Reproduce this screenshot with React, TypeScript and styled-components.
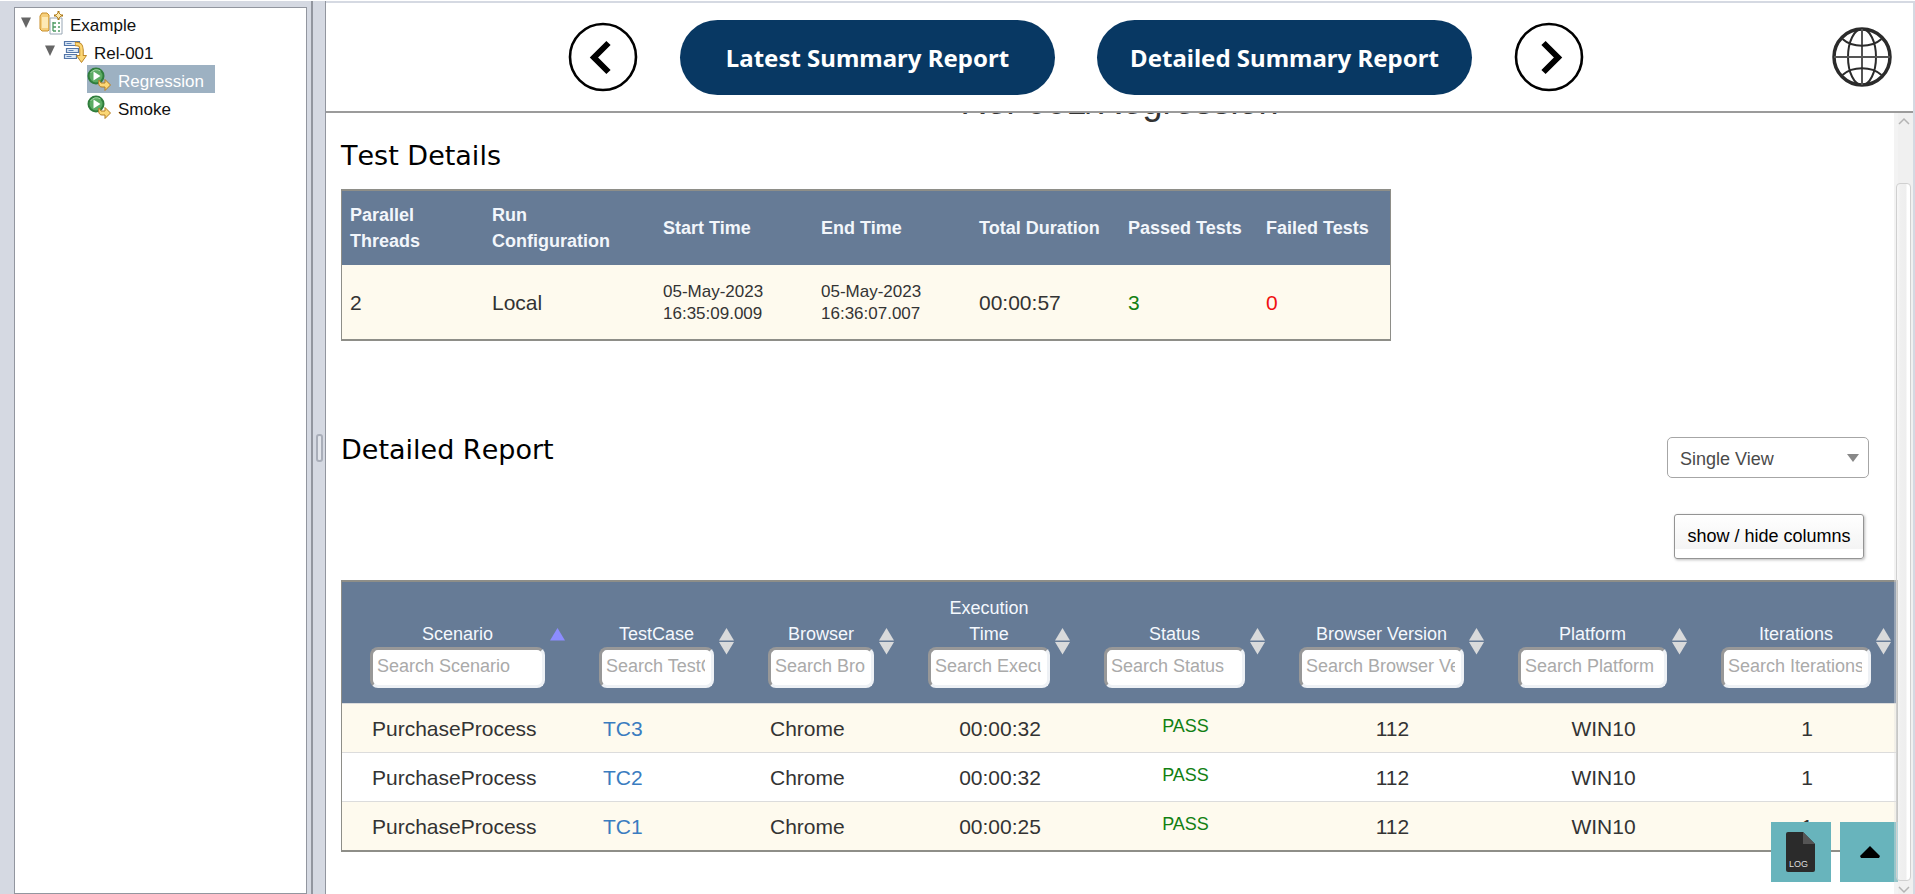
import React from "react";
import styled, { createGlobalStyle } from "styled-components";

const GlobalStyle = createGlobalStyle`
  *, *::before, *::after { box-sizing: border-box; }
  body {
    margin: 0;
    background: #fff;
    color: #333;
    font-family: "Liberation Sans", Arial, sans-serif;
    font-size: 18px;
    line-height: 26px;
  }
  button, input, select { font: inherit; }
`;

const frame = "#d5d9e2";
const edge = "#92969f";
const slate = "#667b96";
const tableEdge = "#8e8e88";

const Shell = styled.div`
  display: flex;
  height: 100vh;
  overflow: hidden;
  border-top: 1px solid #fff;
  background: ${frame};
`;

const Sidebar = styled.aside`
  flex: none;
  width: 293px;
  margin: 6px 0 0 14px;
  padding-top: 1px;
  border: 1px solid ${edge};
  background: #fff;
`;

const Tree = styled.ul`
  margin: 0;
  padding: 0;
  list-style: none;
`;

const TreeRow = styled.li<{ $level: number }>`
  display: flex;
  align-items: center;
  height: 28px;
  padding-left: ${(p) => 5 + p.$level * 24}px;
`;

const Toggle = styled.button`
  display: flex;
  width: 19px;
  margin: 0;
  padding: 0;
  border: 0;
  background: none;
`;

const NodeLabel = styled.a<{ $selected?: boolean }>`
  display: flex;
  align-items: center;
  gap: 7px;
  height: 28px;
  margin-left: ${(p) => (p.$selected === undefined ? 0 : 19)}px;
  padding-right: 11px;
  font-size: 17px;
  text-decoration: none;
  color: ${(p) => (p.$selected ? "#fff" : "#111")};
  background: ${(p) => (p.$selected ? "#9db1c2" : "transparent")};
`;

const NodeName = styled.span`
  padding-top: 6px;
  line-height: 22px;
`;

const Splitter = styled.div`
  flex: none;
  display: flex;
  align-items: center;
  justify-content: center;
  width: 15px;
  margin-left: 4px;
  border-left: 2px solid ${edge};
  border-right: 1px solid ${edge};
`;

const Grip = styled.span`
  width: 7px;
  height: 28px;
  border: 2px solid #a9aeb9;
  border-radius: 3px;
  background: #e2e5eb;
`;

const Main = styled.main`
  flex: 1;
  min-width: 0;
  display: flex;
  flex-direction: column;
  margin: 2px 2px 0 0;
  background: #fff;
`;

const TopBar = styled.header`
  flex: none;
  display: flex;
  align-items: center;
  gap: 6px;
  height: 110px;
  padding-right: 21px;
  border-bottom: 2px solid #9b9b9b;
`;

const ReportNav = styled.nav`
  flex: 1;
  display: flex;
  align-items: center;
  justify-content: center;
  gap: 42px;
`;

const IconButton = styled.button`
  display: flex;
  padding: 0;
  border: 0;
  background: none;
`;

const Pill = styled.button`
  width: 375px;
  height: 75px;
  padding: 2px 0 0;
  border: 0;
  border-radius: 38px;
  background: #083863;
  color: #fff;
  font-family: "Noto Sans", sans-serif;
  font-size: 24px;
  font-weight: 700;
`;

const Viewport = styled.div`
  position: relative;
  flex: 1;
  min-height: 0;
  overflow: hidden;
`;

const Content = styled.div`
  padding: 0 15px;
`;

const TitleStrip = styled.div`
  display: flex;
  align-items: flex-end;
  justify-content: center;
  height: 9px;
  margin-bottom: 16px;
  overflow: hidden;
`;

const Title = styled.h1`
  margin: 0;
  font-size: 36px;
  line-height: 40px;
  font-weight: 400;
`;

const Heading = styled.h2`
  margin: 0;
  font-family: "DejaVu Sans", Verdana, sans-serif;
  font-size: 27px;
  line-height: 36px;
  font-weight: 400;
  font-kerning: none;
  color: #000;
`;

const SummaryTable = styled.table`
  width: 1050px;
  max-width: 100%;
  margin: 15px 0 91px;
  table-layout: fixed;
  border: 1px solid ${tableEdge};
  border-top-width: 2px;
  border-bottom-width: 2px;
  border-collapse: separate;
  border-spacing: 0;
  th, td {
    height: 74px;
    padding: 0 8px;
    text-align: left;
    vertical-align: middle;
  }
  th { background: ${slate}; color: #f2f6fb; }
  td { padding-top: 2px; background: #fefaee; font-size: 21px; }
`;

const Stamp = styled.span`
  display: block;
  font-size: 17px;
  line-height: 22px;
`;

const Count = styled.span<{ $bad?: boolean }>`
  color: ${(p) => (p.$bad ? "#f01010" : "#128012")};
`;

const ReportHead = styled.div`
  display: flex;
  align-items: flex-start;
  justify-content: space-between;
  margin-bottom: 21px;
`;

const Controls = styled.div`
  display: flex;
  flex-direction: column;
  align-items: flex-end;
  gap: 36px;
  padding: 5px 29px 0 0;
`;

const SelectBox = styled.label`
  position: relative;
  display: block;
  svg {
    position: absolute;
    top: 17px;
    right: 10px;
    pointer-events: none;
  }
`;

const ViewSelect = styled.select`
  display: block;
  appearance: none;
  width: 202px;
  height: 41px;
  padding: 2px 12px 0;
  border: 1px solid #a6a6a6;
  border-radius: 5px;
  background: #fff;
  color: #4a4a4a;
`;

const ColumnsButton = styled.button`
  height: 45px;
  width: 190px;
  margin-right: 5px;
  padding: 0 0 2px;
  white-space: nowrap;
  border: 1px solid #949494;
  border-radius: 3px;
  background: linear-gradient(#fff 0%, #f4f4f4 78%, #fff 80%);
  box-shadow: 1px 1px 3px #bbb;
  color: #000;
`;

const ReportTable = styled.table`
  width: 100%;
  table-layout: fixed;
  border: 1px solid ${tableEdge};
  border-top-width: 2px;
  border-bottom-width: 2px;
  border-collapse: separate;
  border-spacing: 0;
  th {
    height: 121px;
    padding: 0;
    vertical-align: bottom;
    font-weight: 400;
    background: ${slate};
    color: #f4f8fd;
  }
  tbody tr:nth-child(odd) { background: #fefaee; }
`;

const HeadCell = styled.div`
  display: flex;
  align-items: flex-end;
  gap: 5px;
  padding: 0 6px 15px 28px;
`;

const Filter = styled.label`
  flex: 1;
  min-width: 0;
  text-align: center;
`;

const FilterInput = styled.input`
  display: block;
  width: 100%;
  height: 41px;
  padding: 0 6px 2px 4px;
  border: 3px solid;
  border-color: #989898 #eef1f5 #eef1f5 #989898;
  border-radius: 8px;
  background: #fff;
  color: #333;
  &::placeholder { color: #aaa; opacity: 1; }
`;

const SortButton = styled.button`
  display: flex;
  margin: 0 0 33px;
  padding: 0;
  border: 0;
  background: none;
`;

const Cell = styled.td<{ $start?: boolean }>`
  height: 49px;
  padding: 2px 5px 0 ${(p) => (p.$start ? 30 : 29)}px;
  border-top: 1px solid #dcdcdc;
  font-size: 21px;
  text-align: ${(p) => (p.$start ? "left" : "center")};
`;

const CaseLink = styled.a`
  padding-left: 2px;
  color: #3a7cc0;
  text-decoration: none;
`;

const Verdict = styled.span`
  display: block;
  padding-bottom: 6px;
  font-size: 18px;
  color: #128012;
`;

const FloatingActions = styled.div`
  position: absolute;
  right: 13px;
  bottom: 12px;
  display: flex;
  gap: 9px;
`;

const ActionButton = styled.button`
  display: flex;
  align-items: center;
  justify-content: center;
  width: 60px;
  height: 60px;
  padding: 0;
  border: 0;
  background: #68b4bc;
`;

const ScrollTrack = styled.div`
  position: absolute;
  top: 0;
  right: 0;
  bottom: 0;
  display: flex;
  flex-direction: column;
  align-items: center;
  width: 19px;
  padding: 4px 0 0;
  background: linear-gradient(to right, rgba(225, 225, 225, 0.4) 4px, #f0f0f0 4px);
`;

const ScrollThumb = styled.div`
  flex: 1;
  width: 15px;
  margin: 58px 0 5px;
  border: 1px solid #d0d0d0;
  border-radius: 4px;
  background: linear-gradient(to right, rgba(255, 255, 255, 0.3) 2px, #f0f0f0 3px, #eee 9px, #fff 10px);
`;

const Expanded = () => (
  <svg width="12" height="12" viewBox="0 0 12 12" aria-hidden="true">
    <path d="M1 0.500h10L6 11z" fill="#666" />
  </svg>
);

const FolderIcon = () => (
  <svg width="24" height="24" viewBox="0 0 24 24" aria-hidden="true">
    <path d="M1 5l2-3h5l2 2v15l-1 1H3l-2-2z" fill="#f6cf7c" stroke="#c98f2b" />
    <path d="M3 6h6v11H3z" fill="#fde9b5" />
    <path d="M11 7h12v16H11z" fill="#fff" stroke="#98a6b4" />
    <path d="M14 11v9M14 12h3M14 16h3M14 20h3M19 12h2M19 16h2M19 20h2" stroke="#4d9a63" strokeWidth="1.3" fill="none" />
    <path d="M19.500 0v9M15 4.500h9" stroke="#a87718" strokeWidth="2" />
    <path d="M19.500 1.500l3 3-3 3-3-3z" fill="#fbe9ae" stroke="#b98422" />
  </svg>
);

const ReleaseIcon = () => (
  <svg width="24" height="24" viewBox="0 0 24 24" aria-hidden="true">
    <path d="M1.500 2.500h15v4h-15zM3.500 9.500h12v4h-12zM1.500 15.500h12v4h-12z" fill="#dce8f6" stroke="#5476a8" strokeWidth="1.200" />
    <path d="M3.500 4.500h5M5.500 11.500h5M3.500 17.500h5" stroke="#5c83b8" strokeWidth="1.200" />
    <path d="M12 5c5-.5 6.500 2 6.500 6v6" fill="none" stroke="#bd8524" strokeWidth="4.500" />
    <path d="M13.500 16.500h10L18.500 23.500z" fill="#fbd776" stroke="#bd8524" />
    <path d="M12.500 5c5-.5 6 2 6 6v7" fill="none" stroke="#fbd776" strokeWidth="2.500" />
  </svg>
);

const RunIcon = () => (
  <svg width="24" height="24" viewBox="0 0 24 24" aria-hidden="true">
    <circle cx="9" cy="9" r="7.500" fill="#5cab63" stroke="#2f7d3c" strokeWidth="2" />
    <path d="M3.500 6a7 7 0 0 1 10-2" stroke="#a7d8a8" fill="none" />
    <path d="M6.500 4.500v9l7-4.500z" fill="#fff" />
    <path d="M12 13l2 3h4v-3.500l5.500 5.500-5.500 5.500V20h-3c-3 0-4-3-3-7z" fill="#fbd776" stroke="#b37d22" />
  </svg>
);

const Chevron = ({ back }: { back?: boolean }) => (
  <svg width="70" height="70" viewBox="0 0 70 70" aria-hidden="true">
    <circle cx="35" cy="35" r="33" fill="none" stroke="#000" strokeWidth="2.600" />
    <path d={back ? "M40.500 21L26 35.500 40.500 50" : "M29.500 21L44 35.500 29.500 50"} fill="none" stroke="#000" strokeWidth="6" />
  </svg>
);

const GlobeIcon = () => (
  <svg width="60" height="60" viewBox="0 0 60 60" aria-hidden="true">
    <g fill="none" stroke="#2b2b2b" strokeWidth="2">
      <circle cx="30" cy="30" r="28" strokeWidth="3.500" />
      <ellipse cx="30" cy="30" rx="14" ry="28" />
      <path d="M30 2v56M2 30h56" stroke="#555" />
      <path d="M10.500 12c10 9 29 9 39 0M10.500 48c10-9 29-9 39 0" />
    </g>
  </svg>
);

const SortIcon = ({ active }: { active?: boolean }) => (
  <svg width="15" height="27" viewBox="0 0 15 27" aria-hidden="true">
    <path d="M7.500 0L15 12.500H0z" fill={active ? "#8c8cff" : "#d9dadb"} />
    {!active && <path d="M0 14h15L7.500 26.500z" fill="#d9dadb" />}
  </svg>
);

const LogIcon = () => (
  <svg width="30" height="40" viewBox="0 0 30 40" aria-hidden="true">
    <path d="M2 0h15l12 12v26a2 2 0 0 1-2 2H2a2 2 0 0 1-2-2V2a2 2 0 0 1 2-2z" fill="#2b2b2b" />
    <path d="M17 0l12 12H17z" fill="#555" />
    <text x="3" y="35" fontSize="9" fontFamily="Liberation Sans, sans-serif" fill="#ddd">LOG</text>
  </svg>
);

const columns = [
  { name: "Scenario", width: 229 },
  { name: "TestCase", width: 169 },
  { name: "Browser", width: 160 },
  { name: "Execution Time", width: 176 },
  { name: "Status", width: 195 },
  { name: "Browser Version", width: 219 },
  { name: "Platform", width: 203 },
  { name: "Iterations", width: 204 },
];

const runs = [
  { testCase: "TC3", time: "00:00:32" },
  { testCase: "TC2", time: "00:00:32" },
  { testCase: "TC1", time: "00:00:25" },
];

const summaryWidths = [142, 171, 158, 158, 149, 138, 132];
const summaryHeads = ["Parallel Threads", "Run Configuration", "Start Time", "End Time", "Total Duration", "Passed Tests", "Failed Tests"];

export default function App() {
  return (
    <>
      <GlobalStyle />
      <Shell>
        <Sidebar>
          <Tree>
            <TreeRow $level={0}>
              <Toggle aria-label="Collapse Example"><Expanded /></Toggle>
              <NodeLabel href="#example"><FolderIcon /><NodeName>Example</NodeName></NodeLabel>
            </TreeRow>
            <TreeRow $level={1}>
              <Toggle aria-label="Collapse Rel-001"><Expanded /></Toggle>
              <NodeLabel href="#rel-001"><ReleaseIcon /><NodeName>Rel-001</NodeName></NodeLabel>
            </TreeRow>
            <TreeRow $level={2}>
              <NodeLabel href="#regression" $selected><RunIcon /><NodeName>Regression</NodeName></NodeLabel>
            </TreeRow>
            <TreeRow $level={2}>
              <NodeLabel href="#smoke" $selected={false}><RunIcon /><NodeName>Smoke</NodeName></NodeLabel>
            </TreeRow>
          </Tree>
        </Sidebar>
        <Splitter><Grip /></Splitter>
        <Main>
          <TopBar>
            <ReportNav>
              <IconButton aria-label="Back"><Chevron back /></IconButton>
              <Pill>Latest Summary Report</Pill>
              <Pill>Detailed Summary Report</Pill>
              <IconButton aria-label="Forward"><Chevron /></IconButton>
            </ReportNav>
            <IconButton aria-label="Open in browser"><GlobeIcon /></IconButton>
          </TopBar>
          <Viewport>
            <Content>
              <TitleStrip><Title>Rel-001/Regression</Title></TitleStrip>
              <Heading>Test Details</Heading>
              <SummaryTable>
                <colgroup>{summaryWidths.map((w, i) => <col key={i} width={w} />)}</colgroup>
                <thead>
                  <tr>{summaryHeads.map((h) => <th key={h}>{h}</th>)}</tr>
                </thead>
                <tbody>
                  <tr>
                    <td>2</td>
                    <td>Local</td>
                    <td><Stamp>05-May-2023 16:35:09.009</Stamp></td>
                    <td><Stamp>05-May-2023 16:36:07.007</Stamp></td>
                    <td>00:00:57</td>
                    <td><Count>3</Count></td>
                    <td><Count $bad>0</Count></td>
                  </tr>
                </tbody>
              </SummaryTable>
              <ReportHead>
                <Heading>Detailed Report</Heading>
                <Controls>
                  <SelectBox>
                    <ViewSelect aria-label="View"><option>Single View</option></ViewSelect>
                    <svg width="12" height="8" viewBox="0 0 12 8" aria-hidden="true"><path d="M0 0h12L6 8z" fill="#888" /></svg>
                  </SelectBox>
                  <ColumnsButton>show / hide columns</ColumnsButton>
                </Controls>
              </ReportHead>
              <ReportTable>
                <colgroup>{columns.map((c) => <col key={c.name} width={c.width} />)}</colgroup>
                <thead>
                  <tr>
                    {columns.map((c, i) => (
                      <th key={c.name}>
                        <HeadCell>
                          <Filter>
                            {c.name}
                            <FilterInput placeholder={`Search ${c.name}`} />
                          </Filter>
                          <SortButton aria-label={`Sort by ${c.name}`}><SortIcon active={i === 0} /></SortButton>
                        </HeadCell>
                      </th>
                    ))}
                  </tr>
                </thead>
                <tbody>
                  {runs.map((r) => (
                    <tr key={r.testCase}>
                      <Cell $start>PurchaseProcess</Cell>
                      <Cell $start><CaseLink href={`#${r.testCase}`}>{r.testCase}</CaseLink></Cell>
                      <Cell $start>Chrome</Cell>
                      <Cell>{r.time}</Cell>
                      <Cell><Verdict>PASS</Verdict></Cell>
                      <Cell>112</Cell>
                      <Cell>WIN10</Cell>
                      <Cell>1</Cell>
                    </tr>
                  ))}
                </tbody>
              </ReportTable>
            </Content>
            <FloatingActions>
              <ActionButton aria-label="Open log"><LogIcon /></ActionButton>
              <ActionButton aria-label="Back to top">
                <svg width="20" height="12" viewBox="0 0 20 12" aria-hidden="true"><path d="M10 0l10 10-1 2H1l-1-2z" fill="#000" /></svg>
              </ActionButton>
            </FloatingActions>
            <ScrollTrack>
              <svg width="12" height="8" viewBox="0 0 12 8" aria-hidden="true"><path d="M1 7l5-5 5 5" fill="none" stroke="#b4b4b4" strokeWidth="1.500" /></svg>
              <ScrollThumb />
              <svg width="12" height="8" viewBox="0 0 12 8" aria-hidden="true"><path d="M1 1l5 5 5-5" fill="none" stroke="#b4b4b4" strokeWidth="1.500" /></svg>
            </ScrollTrack>
          </Viewport>
        </Main>
      </Shell>
    </>
  );
}
